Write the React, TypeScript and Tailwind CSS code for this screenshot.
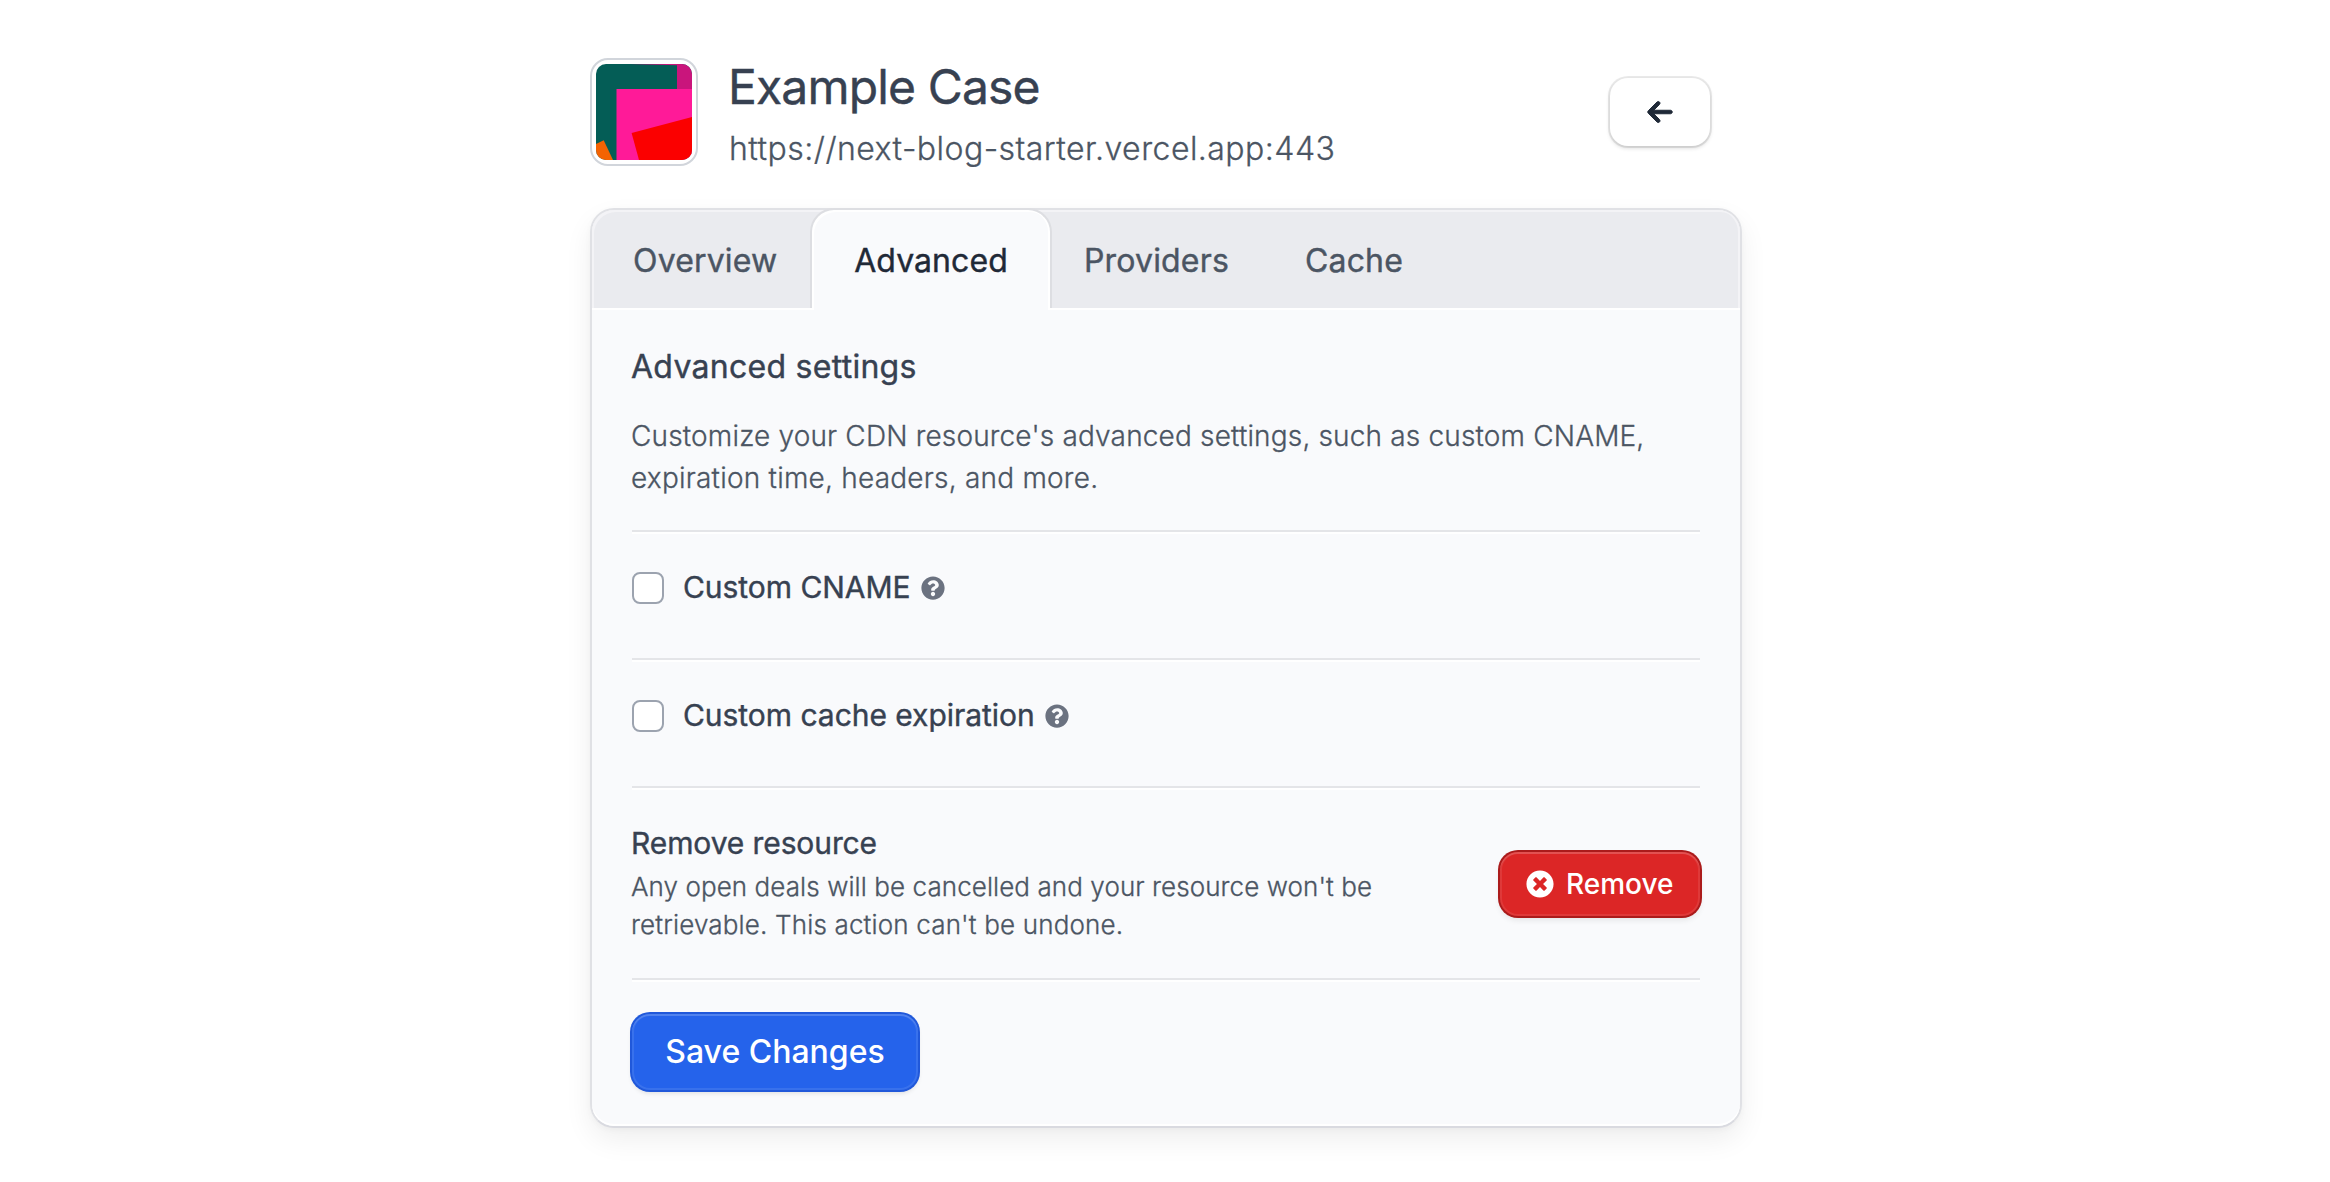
import type { ReactNode } from "react";
import { FaQuestionCircle, FaTimesCircle } from "react-icons/fa";
import { FaArrowLeft } from "react-icons/fa6";

function Avatar() {
  return (
    <div className="h-[108px] w-[108px] shrink-0 rounded-[18px] border-2 border-[#d1d5db] bg-white p-1">
      <svg viewBox="0 0 96 96" className="block h-24 w-24 rounded-[10px]">
        <rect width="96" height="96" fill="#045d56" />
        <path d="M34 0H96V26H81V1.2Z" fill="#c9157c" />
        <path d="M20.5 25H96V96H20.5Z" fill="#ff1a98" />
        <path d="M35.6 69 96 53V96H43Z" fill="#fb0000" />
        <path d="M0 80 7.7 76.2 17 96H0Z" fill="#f46302" />
      </svg>
    </div>
  );
}

function Option({ label }: { label: string }) {
  return (
    <div className="flex h-32 items-start border-t-2 border-[#e4e5e8] pt-10 shadow-[inset_0_2px_0_white]">
      <input
        type="checkbox"
        aria-label={label}
        className="h-8 w-8 shrink-0 appearance-none rounded-lg border-2 border-[#9ca3af] bg-white"
      />
      <span className="-mt-px ml-[19px] text-[30px] leading-8 tracking-[-0.04px] text-[#374151] [-webkit-text-stroke:0.4px]">
        {label}
      </span>
      <FaQuestionCircle className="mt-1 ml-2.5 h-6 w-6 text-[#6b7280]" />
    </div>
  );
}

function Tab({ children, className }: { children: ReactNode; className: string }) {
  return (
    <button
      className={`h-full pt-[3px] text-[32px] leading-10 tracking-[0.17px] text-[#4b5563] [-webkit-text-stroke:0.4px] ${className}`}
    >
      {children}
    </button>
  );
}

export default function App() {
  return (
    <div className="h-[1182px] overflow-hidden bg-white pt-[58px] pl-0.5 font-['Inter',sans-serif]">
      <div className="mx-auto w-[1152px]">
        <header className="flex h-[108px]">
          <Avatar />
          <div className="ml-[30px]">
            <h1 className="h-[58px] text-[48px] leading-[58px] tracking-[-0.85px] text-[#374151] [-webkit-text-stroke:0.4px]">
              Example Case
            </h1>
            <p className="mt-[13px] ml-px text-[32px] leading-10 font-light tracking-[0.46px] text-[#4b5563] [-webkit-text-stroke:0.3px]">
              https://next-blog-starter.vercel.app:443
            </p>
          </div>
          <button
            aria-label="Back"
            className="mt-5 mr-8 ml-auto flex h-[68px] w-[100px] items-center justify-center rounded-[18px] bg-white text-[#1f2937] shadow-[0_0_0_2px_rgba(0,0,0,0.08),0_2px_4px_rgba(0,0,0,0.16)]"
          >
            <FaArrowLeft className="h-7 w-7 overflow-visible stroke-current [stroke-width:18]" />
          </button>
        </header>

        <main className="mt-[42px] flex h-[920px] flex-col rounded-[24px] border-2 border-[#e0e1e5] border-b-[#d9dae0] bg-[#f9fafc] shadow-[0_12px_28px_rgba(0,0,0,0.065),0_2px_6px_rgba(0,0,0,0.03)]">
          <nav className="flex h-[98px] rounded-t-[22px] bg-[#eaebef] shadow-[inset_2px_2px_0_#f3f3f6,inset_-2px_0_0_#f3f3f6]">
            <Tab className="w-[218px] pl-[41px] text-left">Overview</Tab>
            <div className="relative -mt-0.5 h-[100px] w-[242px] rounded-t-[24px] border-2 border-b-0 border-[#dddee2] bg-[#f9fafc] shadow-[inset_2px_2px_0_white,inset_-2px_0_0_white]">
              <button className="h-full w-full pt-[3px] text-[32px] leading-10 tracking-[0.08px] text-[#1f2937] [-webkit-text-stroke:0.4px]">
                Advanced
              </button>
              <div className="absolute top-full right-0.5 left-0.5 h-0.5 bg-[#f9fafc]" />
            </div>
            <Tab className="ml-8">Providers</Tab>
            <Tab className="ml-[76px]">Cache</Tab>
          </nav>

          <section className="flex-1 rounded-b-[22px] border-t-2 border-white px-10 pt-[37px] shadow-[inset_0_-2px_0_white]">
            <h2 className="-ml-px text-[32px] leading-10 tracking-[0.28px] text-[#374151] [-webkit-text-stroke:0.4px]">
              Advanced settings
            </h2>
            <p className="mt-7 mb-[31px] -ml-px text-[28px] leading-[42px] font-light tracking-[0.16px] text-[#4b5563] [-webkit-text-stroke:0.3px]">
              Customize your CDN resource's advanced settings, such as custom CNAME,
              <br />
              <span className="tracking-[0.22px]">expiration time, headers, and more.</span>
            </p>

            <Option label="Custom CNAME" />
            <Option label="Custom cache expiration" />

            <div className="flex h-48 justify-between border-t-2 border-[#e4e5e8] pt-[37px] shadow-[inset_0_2px_0_white]">
              <div className="-ml-px">
                <h3 className="text-[30px] leading-9 tracking-[-0.1px] text-[#374151] [-webkit-text-stroke:0.4px]">
                  Remove resource
                </h3>
                <p className="mt-[7px] text-[26px] leading-[38px] font-light tracking-[0.08px] text-[#4b5563] [-webkit-text-stroke:0.3px]">
                  Any open deals will be cancelled and your resource won't be
                  <br />
                  <span className="tracking-[0.16px]">retrievable. This action can't be undone.</span>
                </p>
              </div>
              <button className="mt-[27px] flex h-16 w-[200px] items-center rounded-[18px] bg-[#dc2626] pl-[26px] text-[28px] font-medium text-white shadow-[inset_0_2px_0_rgba(255,255,255,0.12),inset_0_0_0_2px_rgba(255,255,255,0.09),0_0_0_2px_#ab1b1b,0_4px_6px_rgba(0,0,0,0.09)]">
                <FaTimesCircle className="h-7 w-7" />
                <span className="ml-3">Remove</span>
              </button>
            </div>

            <div className="border-t-2 border-[#e4e5e8] pt-[34px] shadow-[inset_0_2px_0_white]">
              <button className="block h-[76px] w-[286px] rounded-[18px] bg-[#2563eb] text-[32px] font-medium text-white shadow-[inset_0_2px_0_rgba(255,255,255,0.12),inset_0_0_0_2px_rgba(255,255,255,0.09),0_0_0_2px_#2058da,0_3px_5px_rgba(0,0,0,0.12)]">
                Save Changes
              </button>
            </div>
          </section>
        </main>
      </div>
    </div>
  );
}
